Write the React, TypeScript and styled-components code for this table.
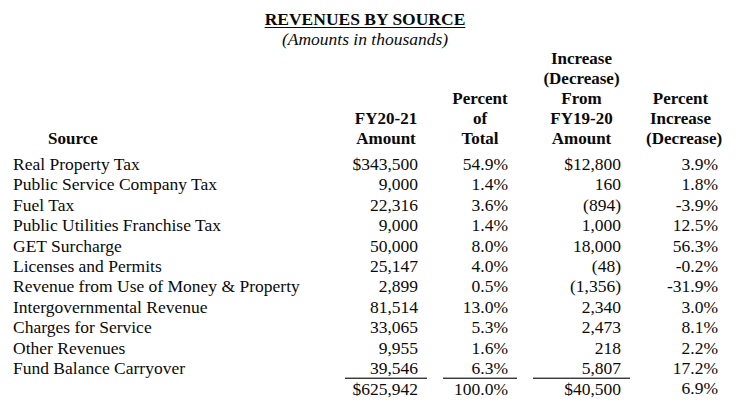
import React from "react";
import styled, { createGlobalStyle, css } from "styled-components";

const GlobalStyle = createGlobalStyle`
  html, body {
    margin: 0;
    padding: 0;
    background: #ffffff;
  }
  body {
    font-family: "Liberation Serif", "Times New Roman", serif;
    color: #0a0a0a;
  }
`;

const Page = styled.div`
  width: 740px;
  height: 413px;
  box-sizing: border-box;
  padding: 9px 13px 0 13px;
  overflow: hidden;
`;

const Heading = styled.div`
  display: flex;
  flex-direction: column;
  align-items: center;
  padding-right: 10px;
`;

const Title = styled.div`
  font-size: 17.5px;
  font-weight: bold;
  line-height: 20px;
  text-decoration: underline;
  text-underline-offset: 2px;
  text-decoration-thickness: 1px;
`;

const Subtitle = styled.div`
  font-size: 17.5px;
  font-style: italic;
  line-height: 20px;
`;

const columns = css`
  display: grid;
  grid-template-columns: 316px 82px 74px 97px 81px;
  column-gap: 16px;
`;

const HeaderRow = styled.div`
  ${columns};
  align-items: end;
  margin-bottom: 5px;
`;

const HeadCell = styled.div<{ $left?: boolean; $shift?: number }>`
  font-size: 17px;
  font-weight: bold;
  line-height: 20px;
  text-align: ${(p) => (p.$left ? "left" : "center")};
  padding-left: ${(p) => (p.$left ? "35px" : "0")};
  padding-right: ${(p) => (p.$shift ? `${p.$shift}px` : "0")};
  white-space: nowrap;
`;

const Row = styled.div`
  ${columns};
  font-size: 17.5px;
  line-height: 20.4px;
`;

const LabelCell = styled.div`
  white-space: nowrap;
`;

const NumCell = styled.div<{ $ruled?: boolean }>`
  text-align: right;
  padding-right: 9px;
  white-space: nowrap;
  ${(p) =>
    p.$ruled &&
    css`
      border-top: 1px solid #3a3a3a;
      box-shadow: 0 -1px 0 #a8a8a8;
    `}
`;

type Line = [string, string, string, string, string];

const rows: Line[] = [
  ["Real Property Tax", "$343,500", "54.9%", "$12,800", "3.9%"],
  ["Public Service Company Tax", "9,000", "1.4%", "160", "1.8%"],
  ["Fuel Tax", "22,316", "3.6%", "(894)", "-3.9%"],
  ["Public Utilities Franchise Tax", "9,000", "1.4%", "1,000", "12.5%"],
  ["GET Surcharge", "50,000", "8.0%", "18,000", "56.3%"],
  ["Licenses and Permits", "25,147", "4.0%", "(48)", "-0.2%"],
  ["Revenue from Use of Money & Property", "2,899", "0.5%", "(1,356)", "-31.9%"],
  ["Intergovernmental Revenue", "81,514", "13.0%", "2,340", "3.0%"],
  ["Charges for Service", "33,065", "5.3%", "2,473", "8.1%"],
  ["Other Revenues", "9,955", "1.6%", "218", "2.2%"],
  ["Fund Balance Carryover", "39,546", "6.3%", "5,807", "17.2%"],
];

const total: Line = ["", "$625,942", "100.0%", "$40,500", "6.9%"];

export default function App() {
  return (
    <>
      <GlobalStyle />
      <Page>
        <Heading>
          <Title>REVENUES BY SOURCE</Title>
          <Subtitle>(Amounts in thousands)</Subtitle>
        </Heading>
        <HeaderRow>
          <HeadCell $left>Source</HeadCell>
          <HeadCell>
            FY20-21
            <br />
            Amount
          </HeadCell>
          <HeadCell>
            Percent
            <br />
            of
            <br />
            Total
          </HeadCell>
          <HeadCell>
            Increase
            <br />
            (Decrease)
            <br />
            From
            <br />
            FY19-20
            <br />
            Amount
          </HeadCell>
          <HeadCell $shift={12}>
            Percent
            <br />
            Increase
            <br />
            (Decrease)
          </HeadCell>
        </HeaderRow>
        {rows.map((r) => (
          <Row key={r[0]}>
            <LabelCell>{r[0]}</LabelCell>
            <NumCell>{r[1]}</NumCell>
            <NumCell>{r[2]}</NumCell>
            <NumCell>{r[3]}</NumCell>
            <NumCell>{r[4]}</NumCell>
          </Row>
        ))}
        <Row>
          <LabelCell>{total[0]}</LabelCell>
          <NumCell $ruled>{total[1]}</NumCell>
          <NumCell $ruled>{total[2]}</NumCell>
          <NumCell $ruled>{total[3]}</NumCell>
          <NumCell>{total[4]}</NumCell>
        </Row>
      </Page>
    </>
  );
}
